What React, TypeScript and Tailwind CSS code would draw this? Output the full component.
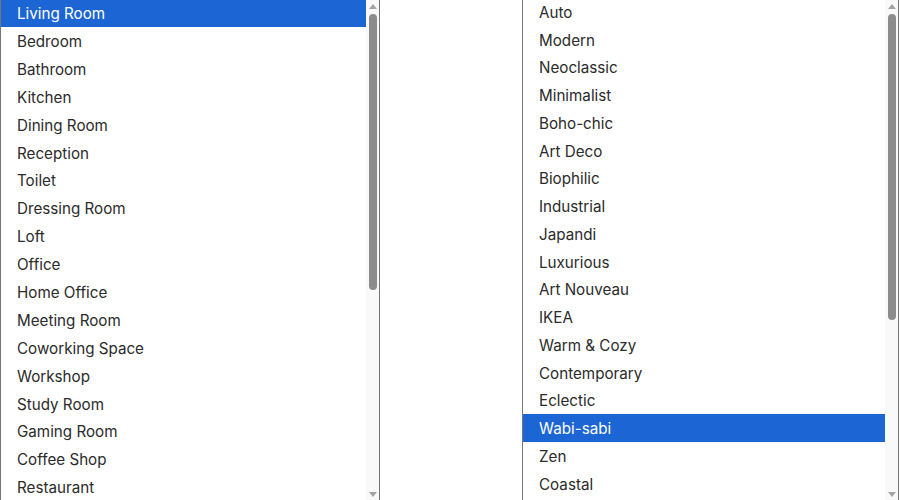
import React from 'react';

const rooms = [
  'Living Room', 'Bedroom', 'Bathroom', 'Kitchen', 'Dining Room', 'Reception', 'Toilet',
  'Dressing Room', 'Loft', 'Office', 'Home Office', 'Meeting Room', 'Coworking Space',
  'Workshop', 'Study Room', 'Gaming Room', 'Coffee Shop', 'Restaurant',
];

const styles = [
  'Auto', 'Modern', 'Neoclassic', 'Minimalist', 'Boho-chic', 'Art Deco', 'Biophilic',
  'Industrial', 'Japandi', 'Luxurious', 'Art Nouveau', 'IKEA', 'Warm & Cozy', 'Contemporary',
  'Eclectic', 'Wabi-sabi', 'Zen', 'Coastal',
];

function Scrollbar({ thumb }: { thumb: string }) {
  return (
    <div className="w-[13px] shrink-0 bg-[#f9f9f9] flex flex-col items-center pt-[4px]">
      <svg width="8" height="5" viewBox="0 0 8 5"><path d="M0 5 L4 0 L8 5 Z" fill="#a3a3a3" /></svg>
      <div className={`mt-[5px] w-[8px] rounded-full bg-[#8c8c8c] ${thumb}`} />
      <div className="flex-1" />
      <svg width="8" height="5" viewBox="0 0 8 5" className="mb-[3px]"><path d="M0 0 L8 0 L4 5 Z" fill="#a3a3a3" /></svg>
    </div>
  );
}

function ListBox({ items, selected, rowClass, offset, thumb, width }: {
  items: string[]; selected: string; rowClass: string; offset: string; thumb: string; width: string;
}) {
  return (
    <div className={`${width} h-[500px] border-x border-[#767676] bg-white flex overflow-hidden`}>
      <div className={`flex-1 flex flex-col ${offset}`}>
        {items.map(item => (
          <div
            key={item}
            className={`${rowClass} shrink-0 flex items-center pl-[16px] pt-[3px] text-[15.2px] ${item === selected ? 'bg-[#1b66d4] text-white' : 'text-[#2b2b2b]'}`}
          >
            {item}
          </div>
        ))}
      </div>
      <Scrollbar thumb={thumb} />
    </div>
  );
}

export default function App() {
  return (
    <div className="w-[900px] h-[500px] overflow-hidden bg-white flex gap-[142px] font-['Inter',sans-serif]">
      <ListBox items={rooms} selected="Living Room" rowClass="h-[27.9px]" offset="-mt-px" thumb="h-[276px]" width="w-[380px]" />
      <ListBox items={styles} selected="Wabi-sabi" rowClass="h-[27.75px]" offset="-mt-[2px]" thumb="h-[306px]" width="w-[377px]" />
    </div>
  );
}
